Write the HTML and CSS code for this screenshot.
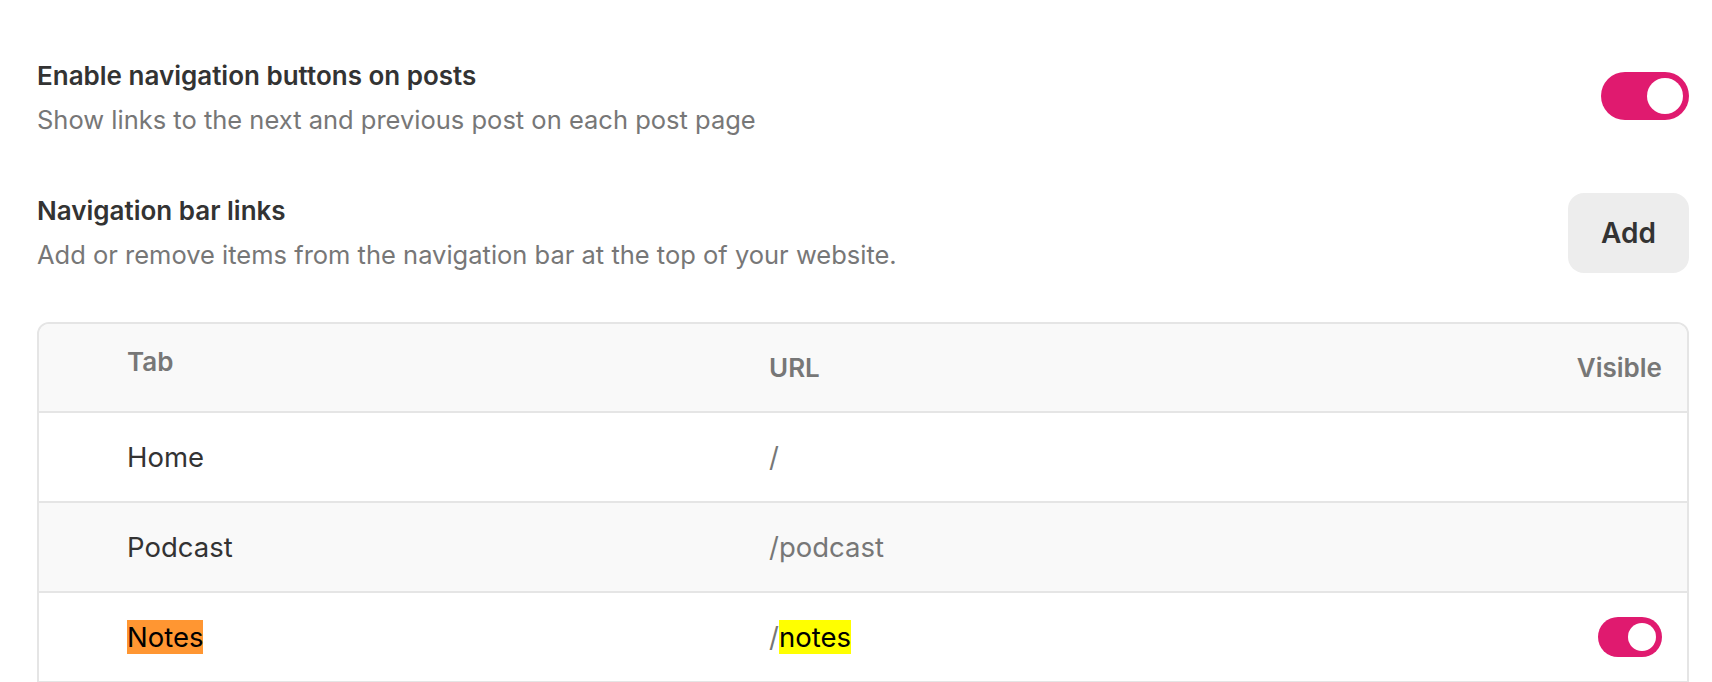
FILE: index.html
```html
<!DOCTYPE html>
<html lang="en">
<head>
<meta charset="utf-8">
<title>Navigation settings</title>
<link rel="stylesheet" href="styles.css">
</head>
<body>
<div class="page">
  <section class="setting">
    <div class="setting-text">
      <h2 class="setting-title">Enable navigation buttons on posts</h2>
      <p class="setting-desc">Show links to the next and previous post on each post page</p>
    </div>
    <span class="toggle toggle-lg toggle-raised"><span class="knob"></span></span>
  </section>

  <section class="setting setting-links">
    <div class="setting-text">
      <h2 class="setting-title">Navigation bar links</h2>
      <p class="setting-desc">Add or remove items from the navigation bar at the top of your website.</p>
    </div>
    <button class="btn-add" type="button">Add</button>
  </section>

  <div class="nav-table">
    <div class="row head">
      <div class="cell cell-tab-head">Tab</div>
      <div class="cell">URL</div>
      <div class="cell cell-right">Visible</div>
    </div>
    <div class="row">
      <div class="cell">Home</div>
      <div class="cell url">/</div>
      <div class="cell cell-right"></div>
    </div>
    <div class="row alt">
      <div class="cell">Podcast</div>
      <div class="cell url">/podcast</div>
      <div class="cell cell-right"></div>
    </div>
    <div class="row last">
      <div class="cell"><mark class="hl-active">Notes</mark></div>
      <div class="cell url">/<mark class="hl">notes</mark></div>
      <div class="cell cell-right"><span class="toggle toggle-sm"><span class="knob"></span></span></div>
    </div>
  </div>
</div>
</body>
</html>
```

FILE: styles.css
```css
* { box-sizing: border-box; }

html, body {
  margin: 0;
  padding: 0;
  background: #ffffff;
}

body {
  font-family: Inter, "Noto Sans", "Liberation Sans", sans-serif;
  color: #333333;
  overflow: hidden;
}

.page {
  padding: 58px 23px 0 37px;
}

.setting {
  display: flex;
  align-items: center;
  justify-content: space-between;
}

.setting-links {
  margin-top: 55px;
}

.setting-title {
  margin: 0;
  font-size: 26px;
  line-height: 36px;
  font-weight: 600;
  color: #333333;
}

.setting-desc {
  margin: 8px 0 0;
  font-size: 25.5px;
  line-height: 36px;
  font-weight: 400;
  color: #777777;
}

.toggle {
  display: flex;
  align-items: center;
  justify-content: flex-end;
  background: #e01a6f;
  border-radius: 999px;
  padding: 6px;
}

.toggle-raised {
  margin-bottom: 4px;
}

.toggle .knob {
  display: block;
  background: #ffffff;
  border-radius: 50%;
}

.toggle-lg {
  width: 88px;
  height: 48px;
}

.toggle-lg .knob {
  width: 36px;
  height: 36px;
}

.toggle-sm {
  width: 64px;
  height: 40px;
}

.toggle-sm .knob {
  width: 28px;
  height: 28px;
}

.btn-add {
  width: 121px;
  height: 80px;
  border: none;
  border-radius: 16px;
  background: #ededed;
  color: #333333;
  font-family: inherit;
  font-size: 28px;
  font-weight: 600;
  padding: 0;
}

.nav-table {
  margin-top: 49px;
  border: 2px solid #e5e5e5;
  border-radius: 12px 12px 0 0;
  overflow: hidden;
}

.row {
  display: grid;
  grid-template-columns: 642px 1fr auto;
  align-items: center;
  height: 90px;
  padding: 0 25px 0 88px;
  border-bottom: 2px solid #e5e5e5;
  background: #ffffff;
  font-size: 27.5px;
  color: #333333;
}

.row.last {
  border-bottom: none;
  height: 88px;
}

.row.head,
.row.alt {
  background: #f9f9f9;
}

.row.head {
  height: 89px;
  font-size: 26px;
  font-weight: 600;
  color: #777777;
}

.cell-tab-head {
  padding-bottom: 12px;
}

.cell-right {
  display: flex;
  justify-content: flex-end;
}

.url {
  color: #777777;
}

.hl,
.hl-active {
  color: #000000;
}

.hl {
  background: #ffff00;
}

.hl-active {
  background: #ff9632;
}
```
